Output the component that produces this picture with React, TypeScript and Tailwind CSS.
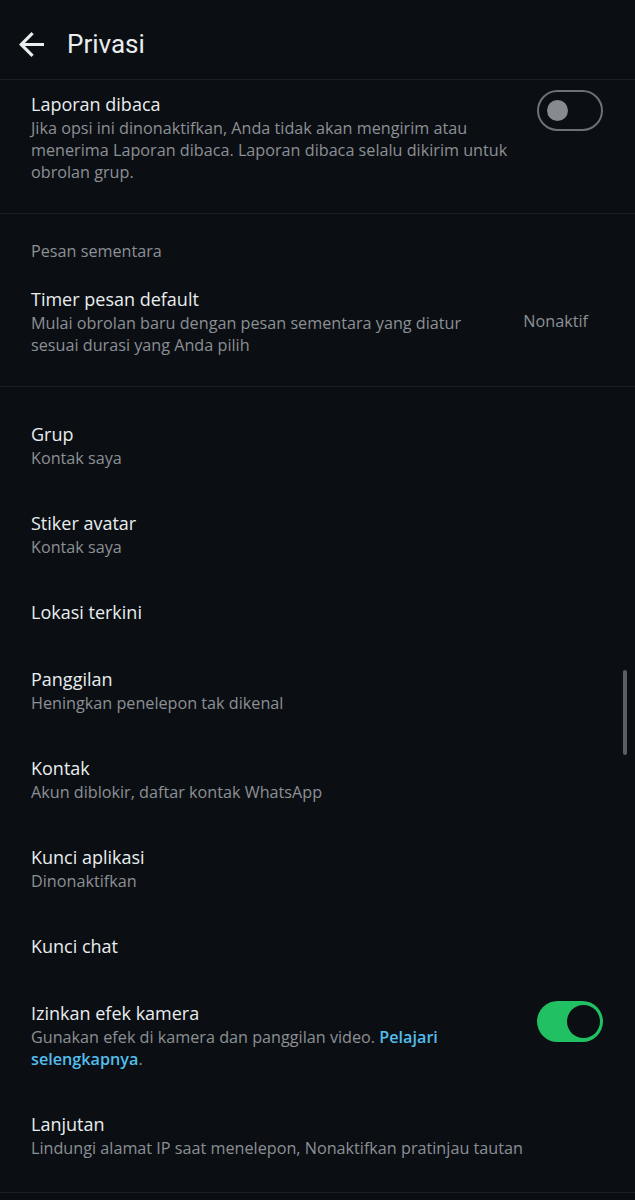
const font = { fontFamily: '"Open Sans", Roboto, sans-serif' };

function Row({ title, sub, right }: { title: string; sub?: React.ReactNode; right?: React.ReactNode }) {
  return (
    <div className="flex items-center justify-between pl-[31px] pr-[32px] py-[21px]">
      <div className="flex-1 pr-6">
        <div className="text-[18px] leading-[25px] text-[#e9edef]">{title}</div>
        {sub && <div className="text-[16.2px] leading-[22px] text-[#8b9095]">{sub}</div>}
      </div>
      {right}
    </div>
  );
}

function Toggle({ on }: { on: boolean }) {
  if (on) {
    return (
      <div className="flex h-[41px] w-[66px] shrink-0 items-center justify-end rounded-full bg-[#21c063] pr-[3px]">
        <div className="h-[33px] w-[33px] rounded-full bg-[#0b0f13]" />
      </div>
    );
  }
  return (
    <div className="flex h-[41px] w-[66px] shrink-0 items-center rounded-full border-[2.5px] border-[#6c7176] pl-[8px]">
      <div className="h-[21px] w-[21px] rounded-full bg-[#878b90]" />
    </div>
  );
}

export default function App() {
  return (
    <div className="relative h-[1200px] w-[635px] overflow-hidden bg-[#0b0f13]" style={font}>
      {/* header */}
      <div className="flex h-[80px] items-center border-b border-[#1b1f23] pl-[19px] pt-[9px]">
        <svg width="25" height="25" viewBox="4 4 16 16" fill="#e9edef">
          <path d="M20 11H7.83l5.59-5.59L12 4l-8 8 8 8 1.41-1.41L7.83 13H20v-2z" />
        </svg>
        <div className="ml-[23px] text-[26px] text-[#e9edef]" style={{ fontFamily: 'Roboto, sans-serif' }}>
          Privasi
        </div>
      </div>

      {/* laporan dibaca */}
      <div className="border-b border-[#1b1f23] pt-[10px] pb-[30px] pl-[31px] pr-[32px]">
        <div className="flex items-start justify-between">
          <div className="flex-1 pr-6 pt-[2px]">
            <div className="text-[18px] leading-[25px] text-[#e9edef]">Laporan dibaca</div>
            <div className="text-[16.2px] leading-[22px] text-[#8b9095]">
              Jika opsi ini dinonaktifkan, Anda tidak akan mengirim atau menerima Laporan dibaca. Laporan dibaca selalu dikirim untuk obrolan grup.
            </div>
          </div>
          <Toggle on={false} />
        </div>
      </div>

      {/* pesan sementara */}
      <div className="border-b border-[#1b1f23] pb-[9px]">
        <div className="pl-[31px] pt-[26px] pb-[4px] text-[16.2px] leading-[22px] text-[#8b9095]">Pesan sementara</div>
        <Row
          title="Timer pesan default"
          sub="Mulai obrolan baru dengan pesan sementara yang diatur sesuai durasi yang Anda pilih"
          right={<div className="shrink-0 pl-4 pr-[15px] text-[16.2px] text-[#8b9095]">Nonaktif</div>}
        />
      </div>

      <div className="pt-[14px]">
        <Row title="Grup" sub="Kontak saya" />
        <Row title="Stiker avatar" sub="Kontak saya" />
        <Row title="Lokasi terkini" />
        <Row title="Panggilan" sub="Heningkan penelepon tak dikenal" />
        <Row title="Kontak" sub="Akun diblokir, daftar kontak WhatsApp" />
        <Row title="Kunci aplikasi" sub="Dinonaktifkan" />
        <Row title="Kunci chat" />
        <div className="flex items-start justify-between pl-[31px] pr-[32px] py-[21px]">
          <div className="flex-1 pr-[90px]">
            <div className="text-[18px] leading-[25px] text-[#e9edef]">Izinkan efek kamera</div>
            <div className="text-[16.2px] leading-[22px] text-[#8b9095]">
              <div>
                Gunakan efek di kamera dan panggilan video.{' '}
                <span className="font-semibold text-[#53bdeb]">Pelajari</span>
              </div>
              <div>
                <span className="font-semibold text-[#53bdeb]">selengkapnya</span>.
              </div>
            </div>
          </div>
          <Toggle on={true} />
        </div>
        <div className="border-b border-[#1b1f23] pb-[12px]">
          <Row title="Lanjutan" sub="Lindungi alamat IP saat menelepon, Nonaktifkan pratinjau tautan" />
        </div>
      </div>

      {/* scrollbar */}
      <div className="absolute left-[623px] top-[670px] h-[85px] w-[4px] rounded-full bg-[#5b5e62]" />
    </div>
  );
}
